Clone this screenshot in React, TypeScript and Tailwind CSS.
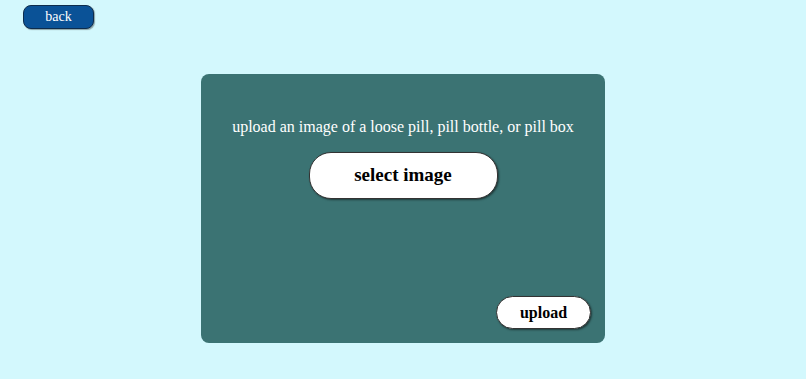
export default function App() {
  return (
    <div
      className="min-h-screen w-full bg-[#d3f8fd] pt-[5px]"
      style={{ fontFamily: '"Liberation Serif", "Times New Roman", serif' }}
    >
      <button className="ml-[23px] flex h-[24px] w-[71px] items-center justify-center rounded-[8px] border border-[#0d2c4c] bg-[#0a5297] pb-[1px] text-[14px] text-white shadow-[1px_1px_1px_rgba(0,0,0,0.35)]">
        back
      </button>
      <div className="mx-auto mt-[45px] flex h-[269px] w-[404px] flex-col items-center rounded-[8px] bg-[#3b7373] px-[14px] pt-[44px] pb-[14px]">
        <p className="text-[16px] leading-[18px] text-white">
          upload an image of a loose pill, pill bottle, or pill box
        </p>
        <button className="mt-[16px] flex h-[47px] w-[189px] items-center justify-center rounded-[22px] border border-[#333] bg-white text-[19px] font-bold text-black shadow-[1px_1px_2px_rgba(0,0,0,0.5)]">
          select image
        </button>
        <button className="mt-auto flex h-[33px] w-[95px] items-center justify-center self-end rounded-[17px] border border-[#333] bg-white text-[16px] font-bold text-black shadow-[1px_1px_2px_rgba(0,0,0,0.5)]">
          upload
        </button>
      </div>
    </div>
  );
}
